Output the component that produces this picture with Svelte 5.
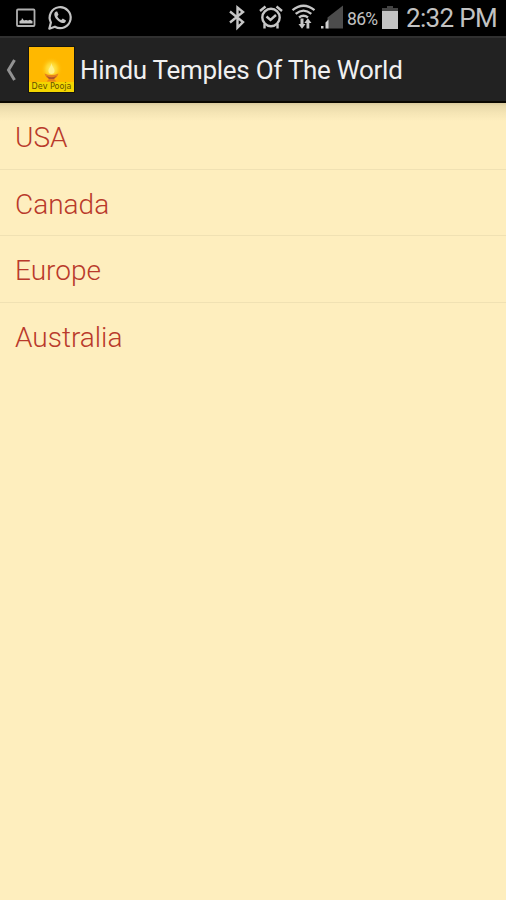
<script>
  const time = '2:32 PM';
  const battery = 86;

  let title = 'Hindu Temples Of The World';
  let regions = ['USA', 'Canada', 'Europe', 'Australia'];
</script>

<div class="screen">
  <div class="status-bar">
    <svg class="notifications" width="80" height="36" viewBox="0 0 80 36">
      <rect x="17" y="9.5" width="17.5" height="16.5" rx="1" fill="none" stroke="#b0b0b0" stroke-width="1.8" />
      <path d="M19.500 23.500v-2.500l2-1 .5-2 2 2.500 2-.5 2 .5 2-.7 2.500 1.200v2.500z" fill="#c4c4c4" />
      <path d="M49.300 28.700l1.600-6.200a10.500 10.500 0 1 1 4 4.200z" fill="none" stroke="#c4c4c4" stroke-width="2.200" stroke-linejoin="round" />
      <path d="M56 11.500c-1.700.8-2 2.500-1.500 4.300 1 3.200 4.500 6.700 8 7.200 1.800.2 3.300-.8 3.500-2.600l-3.200-1.800-1.500 1.500c-1.800-.7-3.300-2.200-4-3.900l1.200-1.500-1.300-3.100z" fill="#c4c4c4" />
    </svg>

    <div class="system">
      <svg width="117" height="36" viewBox="227 0 117 36">
        <path d="M230 11.500l13 10.500-5.500 5.500v-20l5.500 4.500-13 10.500" fill="none" stroke="#c6c6c6" stroke-width="2.400" />
        <g fill="none" stroke="#c6c6c6" stroke-width="2.400">
          <circle cx="271" cy="17.500" r="8.700" />
          <path d="M266.500 16.500l4 3.500 5.500-5" />
          <path d="M260 11l5.500-4.500M282 11l-5.500-4.500M264.500 24v4.500M277.500 24v4.500" />
        </g>
        <g fill="none" stroke="#c6c6c6" stroke-width="2.300">
          <path d="M292.500 10.200q11-9 22 0M295.700 13.900q7.800-6.500 15.600 0M299 17.500q4.500-3.500 9 0" />
        </g>
        <path d="M300.500 18.500h3v5.500h2l-3.500 4.800-3.500-4.800h2zM306.500 28.500v-5.500h-2.200l3.600-4.800 3.600 4.800h-2.200v5.500z" fill="#c6c6c6" />
        <path d="M343 5.500v23h-15.500v-11z" fill="#4c4c4c" />
        <path d="M321 28.500v-2.500h2.500v2.500zM325.500 28.500v-6l3-3v9z" fill="#d0d0d0" />
      </svg>
      <span class="percent">{battery}%</span>
      <svg class="battery" width="16" height="23" viewBox="0 0 16 23">
        <path d="M5 0h6v2h5v3H0V2h5z" fill="#444" />
        <path d="M0 5h16v18H0z" fill="#c4c4c4" />
      </svg>
      <span class="time">{time}</span>
    </div>
  </div>

  <header class="action-bar">
    <button class="back" aria-label="Back">
      <svg width="10" height="22" viewBox="0 0 10 22">
        <path d="M8.500 1L2.500 11l6 10" fill="none" stroke="#929292" stroke-width="3" />
      </svg>
    </button>
    <div class="logo">
      <svg width="45" height="35" viewBox="0 0 45 35">
        <defs>
          <radialGradient id="glow">
            <stop offset="0" stop-color="#fff37a" />
            <stop offset="0.5" stop-color="#ffdc35" stop-opacity="0.8" />
            <stop offset="1" stop-color="#ffb800" stop-opacity="0" />
          </radialGradient>
        </defs>
        <ellipse cx="22.500" cy="22" rx="11" ry="12" fill="url(#glow)" />
        <path d="M22.500 16c-.5 4-3 5-3 8a3 3 0 0 0 6 0c0-3-2.500-4-3-8z" fill="#fff18a" />
        <path d="M15.500 26.500q7 3 14 0-1 4-4.500 5.500l2.500 2.500h-10l2.500-2.500q-3.500-1.500-4.500-5.500z" fill="#e6811c" />
        <path d="M17.500 29q5 2.500 10 0l-2.500 3h-5z" fill="#ad552c" />
      </svg>
      <span class="caption">Dev Pooja</span>
    </div>
    <h1>{title}</h1>
  </header>

  <ul class="region-list">
    {#each regions as region}
      <li>{region}</li>
    {/each}
  </ul>
</div>

<style>
  :global(body) {
    background: #feeebe;
  }

  .screen {
    height: 900px;
    overflow: hidden;
    background: #feeebe;
    font-family: Roboto, sans-serif;
  }

  .status-bar {
    display: flex;
    justify-content: space-between;
    height: 36px;
    background: #000;
    color: #c2c2c2;
  }

  .system {
    display: flex;
    align-items: center;
    padding-right: 8px;
  }

  .percent {
    width: 32px;
    margin: 1px 3px 0 3px;
    font-size: 17.5px;
    letter-spacing: -0.7px;
    white-space: nowrap;
  }

  .battery {
    margin-top: -1px;
  }

  .time {
    width: 92px;
    margin-left: 8px;
    font-size: 26px;
    letter-spacing: -0.65px;
    line-height: 36px;
    white-space: nowrap;
  }

  .action-bar {
    display: flex;
    align-items: center;
    box-sizing: border-box;
    height: 67px;
    background: #222;
    border-top: 2px solid #303030;
    border-bottom: 2px solid #090600;
  }

  .back {
    display: flex;
    width: 28px;
    padding: 0 0 0 6px;
    border: 0;
    background: none;
  }

  .logo {
    display: flex;
    flex-direction: column;
    box-sizing: border-box;
    width: 47px;
    height: 47px;
    border: 1px solid #16160f;
    background: #ffb800;
  }

  .caption {
    height: 10px;
    background: #f3d500;
    color: #655000;
    font-family: "DejaVu Sans", sans-serif;
    font-size: 8px;
    line-height: 9px;
    text-align: center;
    white-space: nowrap;
  }

  h1 {
    margin: 0 0 0 5px;
    color: #f0f0f0;
    font-size: 26px;
    font-weight: 400;
    letter-spacing: -0.28px;
    line-height: 34px;
    white-space: nowrap;
  }

  .region-list {
    margin: 0;
    padding: 0;
    list-style: none;
    background: linear-gradient(#d9c99c, #e9daab 3px, #f5e5b5 10px, #feeebe 18px);
  }

  li {
    box-sizing: border-box;
    height: 66.5px;
    padding-left: 15px;
    border-bottom: 1px solid #f0e1b3;
    color: #b93a2b;
    font-size: 28px;
    font-weight: 300;
    line-height: 69px;
  }

  li:last-child {
    border-bottom: 0;
  }
</style>
